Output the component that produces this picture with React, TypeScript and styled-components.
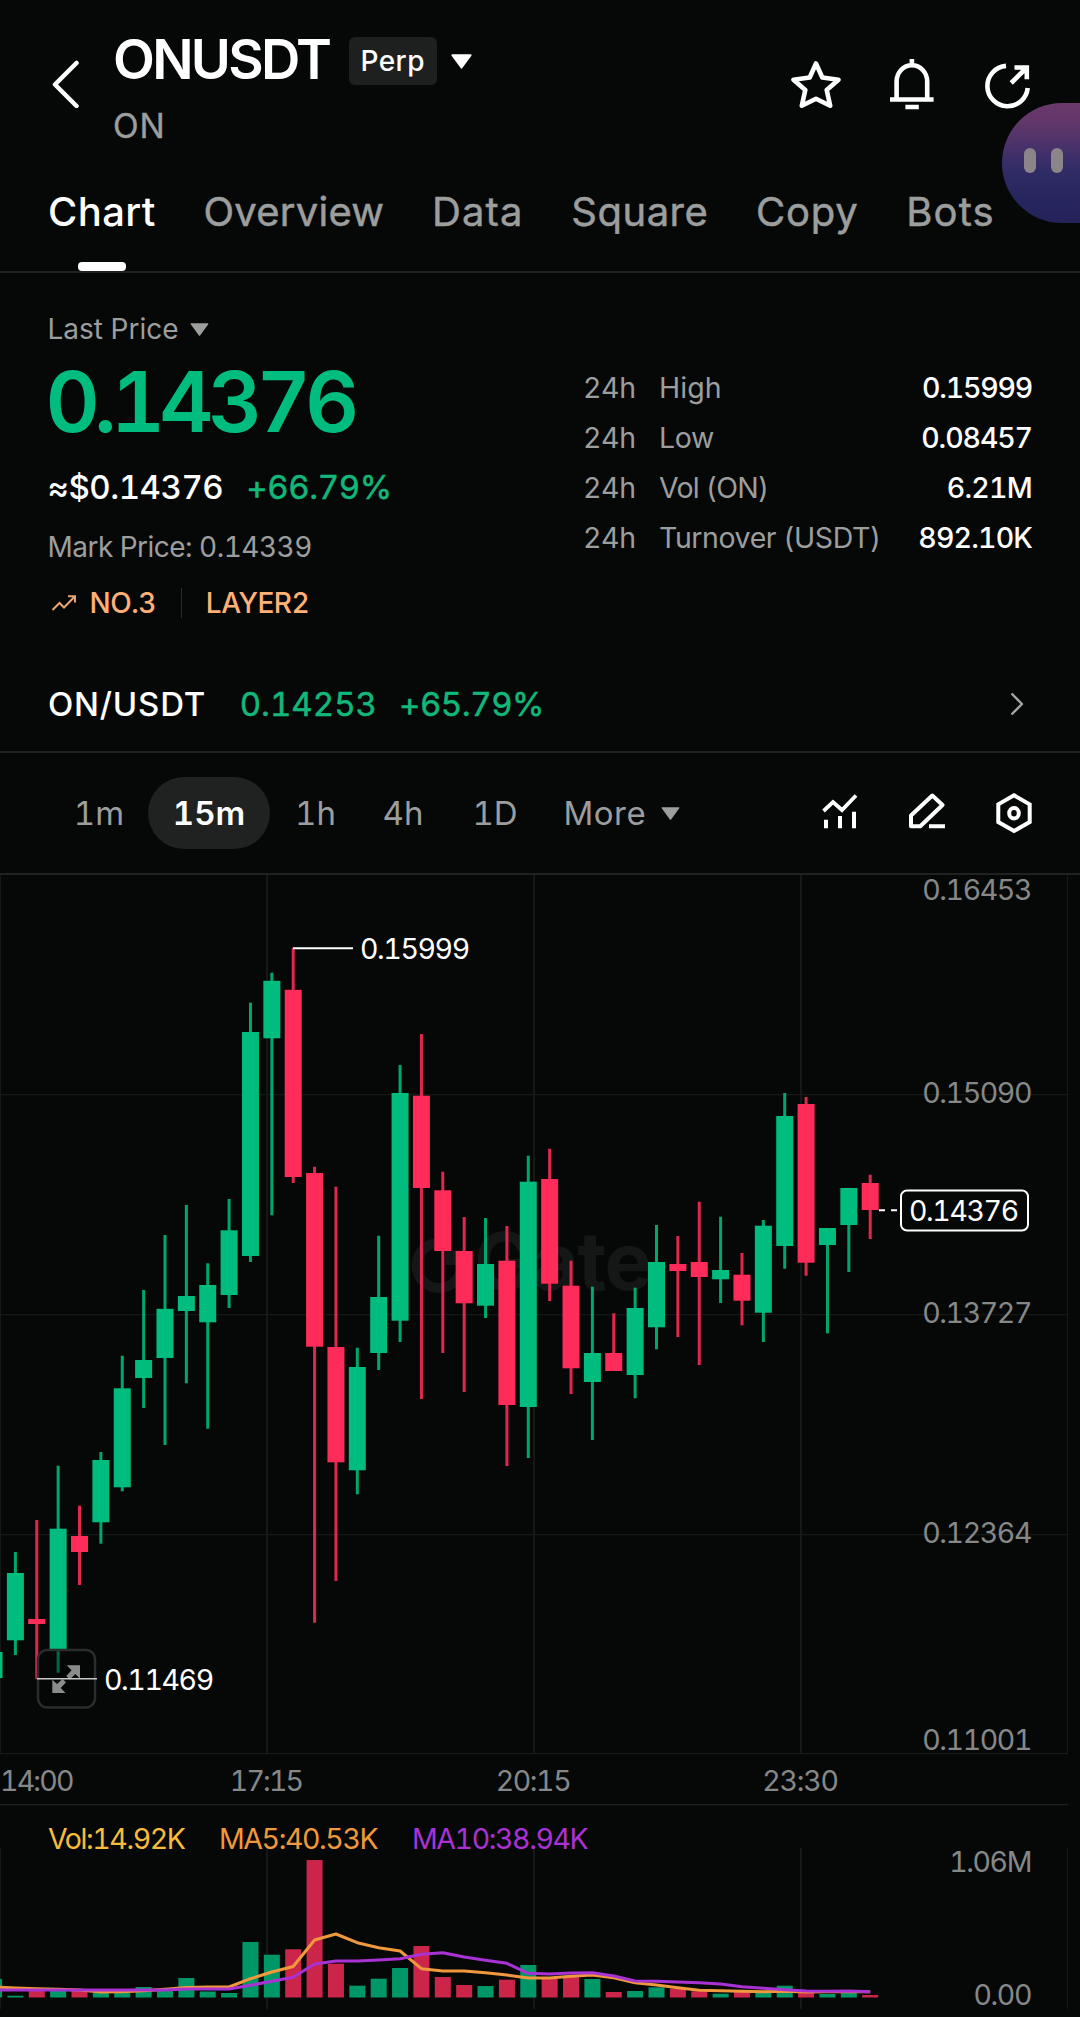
import React from 'react';
import styled, { createGlobalStyle, css } from 'styled-components';

const GREEN = '#00bc7e';
const RED = '#ff2b59';
const MUTED = '#9c9e9e';
const LINE = '#202222';

const GlobalStyle = createGlobalStyle`
  * { box-sizing: border-box; }
  body {
    margin: 0;
    background: #060808;
    color: #fff;
    font-family: Inter, "Liberation Sans", sans-serif;
    font-variant-numeric: tabular-nums;
    -webkit-font-smoothing: antialiased;
  }
`;

const Page = styled.main`
  position: relative;
  width: 1080px;
  height: 2017px;
  overflow: hidden;
  display: flex;
  flex-direction: column;
`;

/* ---------- header ---------- */

const Header = styled.header`
  display: flex;
  align-items: flex-start;
  height: 170px;
  padding: 37px 47px 0 51px;
`;

const BackButton = styled.button`
  display: flex;
  margin-top: 23px;
  padding: 0;
  border: 0;
  background: none;
`;

const TitleBlock = styled.div`
  flex: 1;
  margin-left: 34px;
`;

const TitleRow = styled.div`
  display: flex;
  align-items: center;
  height: 48px;
`;

const Title = styled.h1`
  margin: 0 0 5px;
  font-size: 54.5px;
  font-weight: 600;
  line-height: 48px;
  letter-spacing: -2.7px;
`;

const Badge = styled.span`
  width: 88px;
  height: 48px;
  margin: 0 14px 0 19.5px;
  border-radius: 6px;
  background: #1e2020;
  font-size: 28px;
  font-weight: 500;
  line-height: 48px;
  letter-spacing: 0.4px;
  text-align: center;
`;

const Subtitle = styled.div`
  margin-top: 21px;
  color: ${MUTED};
  font-size: 33.5px;
  line-height: 40px;
  letter-spacing: 0.8px;
  -webkit-text-stroke: 0.4px;
`;

const Actions = styled.div`
  display: flex;
  gap: 46px;
  margin-top: 22px;
`;

const Bubble = styled.div`
  position: absolute;
  top: 103px;
  right: 0;
  display: flex;
  gap: 15px;
  width: 78px;
  height: 120px;
  padding: 45px 0 0 21.5px;
  border-radius: 60px 0 0 60px;
  background: linear-gradient(#6b3869 0%, #63376a 15%, #47316a 38%, #312c66 55%, #27255f 80%, #25225a 100%);
`;

const Eye = styled.span`
  width: 12px;
  height: 25px;
  border-radius: 6px;
  background: #8b8489;
`;

/* ---------- tabs ---------- */

const TabBar = styled.nav`
  display: flex;
  gap: 47.6px;
  height: 103px;
  padding-left: 48px;
  border-bottom: 2px solid ${LINE};
`;

const Tab = styled.div<{ $active?: boolean; $track: number }>`
  display: flex;
  flex-direction: column;
  align-items: center;
  justify-content: space-between;
  color: ${p => (p.$active ? '#fff' : MUTED)};
  font-size: 40px;
  font-weight: ${p => (p.$active ? 500 : 400)};
  line-height: 83px;
  letter-spacing: ${p => p.$track}px;
  -webkit-text-stroke: ${p => (p.$active ? 0 : 0.5)}px;
`;

const Indicator = styled.i`
  width: 48px;
  height: 9px;
  border-radius: 4px;
  background: #fff;
`;

/* ---------- price summary ---------- */

const Summary = styled.section`
  display: flex;
  justify-content: space-between;
  height: 383px;
  padding: 36px 48px 0 47.5px;
`;

const Quote = styled.div`
  display: flex;
  flex-direction: column;
`;

const QuoteLabel = styled.div`
  display: flex;
  align-items: center;
  gap: 12px;
  height: 40px;
  color: ${MUTED};
  font-size: 28px;
`;

const BigPrice = styled.div`
  margin: 20px 0 0 -2px;
  color: ${GREEN};
  font-size: 84px;
  font-weight: 600;
  line-height: 66px;
  letter-spacing: -5.8px;
`;

const FiatRow = styled.div`
  display: flex;
  gap: 23px;
  margin-top: 32px;
  font-size: 33px;
  line-height: 40px;
`;

const Fiat = styled.span`
  font-weight: 500;
  letter-spacing: -0.45px;
`;

const Change = styled.span`
  color: #12b87b;
  letter-spacing: -0.4px;
  -webkit-text-stroke: 0.5px;
`;

const MarkPrice = styled.div`
  margin-top: 20px;
  color: ${MUTED};
  font-size: 28px;
  line-height: 40px;
  letter-spacing: -0.53px;
`;

const Tags = styled.div`
  display: flex;
  align-items: center;
  height: 30px;
  margin-top: 21px;
  color: #ffb077;
  font-size: 28px;
  font-weight: 500;
  line-height: 30px;
  letter-spacing: -0.5px;
`;

const TrendIcon = styled.svg`
  margin: 0 13px 0 3px;
`;

const TagDivider = styled.i`
  width: 1px;
  height: 30px;
  margin: 0 24px 0 25px;
  background: #2a2c2c;
`;

const Stats = styled.dl`
  display: flex;
  flex-direction: column;
  width: 449px;
  margin: 54px 0 0;
`;

const Stat = styled.div`
  display: flex;
  height: 50px;
  color: ${MUTED};
  font-size: 28.5px;
  line-height: 50px;
`;

const Period = styled.span`
  width: 76px;
  letter-spacing: -0.4px;
`;

const StatName = styled.dt<{ $track: number }>`
  flex: 1;
  white-space: nowrap;
  letter-spacing: ${p => p.$track}px;
`;

const StatValue = styled.dd<{ $track: number }>`
  margin: 0;
  color: #fff;
  font-weight: 500;
  letter-spacing: ${p => p.$track}px;
`;

/* ---------- spot pair ---------- */

const PairRow = styled.section`
  display: flex;
  align-items: center;
  height: 97px;
  padding: 0 56px 0 48px;
  border-bottom: 2px solid ${LINE};
  font-size: 33px;
`;

const PairName = styled.span`
  font-weight: 500;
  letter-spacing: 0.8px;
`;

const PairQuote = styled.span<{ $gap: number; $track: number }>`
  margin-left: ${p => p.$gap}px;
  color: #12b87b;
  letter-spacing: ${p => p.$track}px;
  -webkit-text-stroke: 0.5px;
`;

const PairChevron = styled.svg`
  margin-left: auto;
`;

/* ---------- interval bar ---------- */

const IntervalBar = styled.nav`
  display: flex;
  align-items: center;
  height: 122px;
  padding: 0 48px 0 50px;
  border-bottom: 2px solid ${LINE};
`;

const Interval = styled.button<{ $w: number; $active?: boolean }>`
  width: ${p => p.$w}px;
  height: 72px;
  padding: 0;
  border: 0;
  border-radius: 36px;
  background: none;
  color: ${MUTED};
  font: 400 33px/72px Inter, "Liberation Sans", sans-serif;
  font-variant-numeric: tabular-nums;
  ${p =>
    p.$active &&
    css`
      background: #202222;
      color: #fff;
      font-weight: 600;
    `}
`;

const More = styled.div`
  display: flex;
  align-items: center;
  flex: 1;
  gap: 15px;
  padding-left: 18.5px;
  color: ${MUTED};
  font-size: 33px;
  letter-spacing: 0.5px;
`;

const Tools = styled.div`
  display: flex;
  gap: 51px;
`;

/* ---------- chart ---------- */

const ChartSvg = styled.svg`
  display: block;
  overflow: visible;
`;

const ChartText = styled.text<{ $track?: number }>`
  font-size: 28.5px;
  letter-spacing: ${p => p.$track ?? -1.4}px;
`;

const Watermark = styled.text`
  fill: #151717;
  font-size: 80px;
  font-weight: 700;
  letter-spacing: -1.5px;
`;

type Candle = [high: number, top: number, bottom: number, low: number, up: 0 | 1];

// Pixel extents of each 15-minute candle: wick top, body top, body bottom, wick bottom.
const candles: Candle[] = [
  [1652, 1652, 1678, 1678, 1],
  [1552, 1573, 1640.3, 1655, 1],
  [1520, 1619, 1624, 1679, 0],
  [1465.7, 1528.7, 1649.7, 1672.7, 1],
  [1505.7, 1536, 1552, 1585, 0],
  [1452, 1460, 1522.3, 1543.7, 1],
  [1355.7, 1388.3, 1487.3, 1491.3, 1],
  [1290, 1360, 1378, 1408, 1],
  [1235, 1308.8, 1358, 1445, 1],
  [1205, 1296, 1311, 1383.3, 1],
  [1263.3, 1285, 1322.3, 1428.7, 1],
  [1199, 1230.3, 1295, 1308, 1],
  [1002.7, 1032, 1256, 1262, 1],
  [972.7, 980.8, 1038.3, 1215.3, 1],
  [947.7, 989.8, 1177, 1183, 0],
  [1166.7, 1173, 1346.7, 1622.7, 0],
  [1186.7, 1347, 1462.3, 1581, 0],
  [1347.7, 1367, 1470.3, 1494.3, 1],
  [1235.7, 1297, 1353, 1370, 1],
  [1065, 1093, 1320.7, 1342, 1],
  [1034, 1095.7, 1188, 1399, 0],
  [1171.7, 1190.3, 1251, 1353, 0],
  [1217, 1251, 1303.3, 1392, 0],
  [1218, 1264, 1305.7, 1318, 1],
  [1226, 1260.7, 1405, 1466, 0],
  [1155.7, 1181.7, 1407, 1458, 1],
  [1148.7, 1179, 1283.7, 1301, 0],
  [1260.7, 1285.7, 1368.3, 1394, 0],
  [1286.7, 1353, 1382, 1440, 1],
  [1313.3, 1353, 1371, 1371, 0],
  [1287.7, 1308, 1375, 1398.3, 1],
  [1225, 1262, 1327.3, 1349.3, 1],
  [1236, 1264, 1271, 1337, 0],
  [1201.7, 1262, 1277, 1365, 0],
  [1216.7, 1270, 1279.3, 1303, 1],
  [1253, 1274.7, 1300.7, 1325.3, 0],
  [1220, 1225.7, 1312.7, 1342, 1],
  [1093, 1116, 1246, 1268.7, 1],
  [1097, 1104, 1262.7, 1275.7, 0],
  [1228, 1228, 1245, 1333.3, 1],
  [1188, 1188, 1225, 1272, 1],
  [1174.7, 1183, 1210, 1239, 0],
];

const volumeTops = [
  1979, 1995.7, 1989, 1990.5, 1990, 1992.5, 1993, 1987, 1990.5, 1978, 1991.5, 1993, 1942, 1954.7, 1949.3, 1860,
  1963.7, 1985.7, 1978.7, 1968, 1946, 1977, 1985, 1986, 1979.7, 1965, 1977.7, 1977, 1979, 1992, 1991, 1987.3,
  1988.7, 1991.3, 1993.7, 1992, 1993, 1985.7, 1991.7, 1994, 1992, 1995,
];

const ma5 = [
  1987, 1988, 1988.7, 1989.3, 1990, 1992, 1991.7, 1990.7, 1989.3, 1987.5, 1987, 1987, 1978.7, 1972, 1966.5, 1940,
  1934, 1942.7, 1947.7, 1951, 1968.7, 1971, 1971, 1972.7, 1975, 1978, 1978, 1976.3, 1975, 1977.7, 1982.7, 1985,
  1987.7, 1990.3, 1990.7, 1991.3, 1991.7, 1991.3, 1992, 1991.7, 1991.7, 1991.7,
];

const ma10 = [
  1990, 1990, 1990, 1990, 1990, 1990, 1990, 1990, 1990, 1989, 1989, 1989, 1985.3, 1981.3, 1977.3, 1964, 1961, 1961,
  1960, 1958.7, 1954.3, 1952.7, 1957, 1960.3, 1963.3, 1973.3, 1974, 1973, 1972.8, 1976, 1981, 1981.3, 1982, 1982.7,
  1984, 1986.7, 1988.3, 1989.7, 1991, 1991.3, 1991, 1991.7,
];

const candleX = (i: number) => 15.4 + (i - 1) * 21.37;
const toPoints = (ys: number[]) => ys.map((y, i) => `${candleX(i).toFixed(1)},${y}`).join(' ');

const Caret = ({ w, h, color }: { w: number; h: number; color: string }) => (
  <svg width={w} height={h} viewBox="0 0 20 14">
    <path d="M1.2 1H18.8L10 13Z" fill={color} stroke={color} strokeWidth="1.6" strokeLinejoin="round" />
  </svg>
);

function PriceChart() {
  return (
    <ChartSvg width="1080" height="1142" viewBox="0 875 1080 1142">
      <g fill="#161818">
        {[0, 266, 533, 800, 1067].map(x => (
          <React.Fragment key={x}>
            <rect x={x} y="875" width={x === 0 || x === 1067 ? 1 : 2} height="879" />
            <rect x={x} y="1848" width={x === 0 || x === 1067 ? 1 : 2} height="161" />
          </React.Fragment>
        ))}
        {[1094, 1314, 1534, 1753].map(y => (
          <rect key={y} x="0" y={y} width="1068" height="1.3" />
        ))}
      </g>
      <rect x="0" y="1804" width="1068" height="1.3" fill="#1e2020" />

      <g fill="none" stroke="#151717" strokeWidth="10">
        <path d="M439 1243A22.5 22.5 0 1 0 461.5 1266" />
        <rect x="445" y="1250" width="15" height="15" fill="#151717" stroke="none" />
      </g>
      <Watermark x="474" y="1290">Gate</Watermark>

      {candles.map(([high, top, bottom, low, up], i) => (
        <g key={i} fill={up ? GREEN : RED}>
          <rect x={candleX(i) - 1.5} y={high} width="3" height={low - high} opacity="0.88" />
          <rect x={candleX(i) - 8.5} y={top} width="17" height={bottom - top} />
        </g>
      ))}

      <g fill="#868888" textAnchor="end">
        <ChartText x="1031" y="900">0.16453</ChartText>
        <ChartText x="1031" y="1103">0.15090</ChartText>
        <ChartText x="1031" y="1323">0.13727</ChartText>
        <ChartText x="1031" y="1543">0.12364</ChartText>
        <ChartText x="1031" y="1750">0.11001</ChartText>
        <ChartText x="1031" y="1872">1.06M</ChartText>
        <ChartText x="1031" y="2004.5">0.00</ChartText>
      </g>
      <g fill="#868888">
        <ChartText x="0" y="1791" $track={-1.8}>14:00</ChartText>
        <ChartText x="266" y="1791" textAnchor="middle" $track={-1.8}>17:15</ChartText>
        <ChartText x="533" y="1791" textAnchor="middle" $track={-1.4}>20:15</ChartText>
        <ChartText x="800" y="1791" textAnchor="middle" $track={-1.2}>23:30</ChartText>
      </g>

      <path d="M293 948.3H353" stroke="#fff" strokeWidth="2" />
      <ChartText x="360" y="959" fill="#fff">0.15999</ChartText>
      <ChartText x="104" y="1690" fill="#fff">0.11469</ChartText>

      <g>
        <rect x="38" y="1650" width="57" height="57.5" rx="9" fill="#060808" fillOpacity="0.4" stroke="#2b2d2d" strokeWidth="2.5" />
        <g fill="#8a8c8c">
          <path d="M66.7 1665.3H80V1678.7L75.3 1674L69.8 1679.5L66.3 1676L71.6 1670.3Z" />
          <path d="M52.3 1679.7L57 1684L62.5 1679L66 1682.3L60.7 1688L65.5 1693H52.3Z" />
        </g>
        <path d="M37 1678.7H97" stroke="#c8c9c9" strokeWidth="1.6" />
      </g>

      <path d="M879 1210.3H885M891 1210.3H897" stroke="#fff" strokeWidth="2" />
      <rect x="901" y="1190.5" width="127" height="40" rx="6" fill="#060808" stroke="#fff" strokeWidth="2" />
      <ChartText x="909" y="1221" fill="#fff">0.14376</ChartText>

      {volumeTops.map((top, i) => (
        <rect key={i} x={candleX(i) - 8} y={top} width="16" height={1997.5 - top} fill={candles[i][4] ? '#009768' : '#cc254a'} />
      ))}
      <g fill="none" strokeWidth="3" strokeLinejoin="round">
        <polyline points={toPoints(ma5)} stroke="#f0993c" />
        <polyline points={toPoints(ma10)} stroke="#a932d4" />
      </g>

      <ChartText x="48" y="1849" fill="#f8bc3a">Vol:14.92K</ChartText>
      <ChartText x="219" y="1849" fill="#f0993c">MA5:40.53K</ChartText>
      <ChartText x="412" y="1849" fill="#a932d4">MA10:38.94K</ChartText>
    </ChartSvg>
  );
}

const stats = [
  { name: 'High', value: '0.15999', track: 0.1, valueTrack: -1.2 },
  { name: 'Low', value: '0.08457', track: -0.3, valueTrack: -1.1 },
  { name: 'Vol (ON)', value: '6.21M', track: -0.75, valueTrack: -0.75 },
  { name: 'Turnover (USDT)', value: '892.10K', track: -0.42, valueTrack: -0.85 },
];

export default function App() {
  return (
    <Page>
      <GlobalStyle />

      <Header>
        <BackButton aria-label="Back">
          <svg width="28" height="48" viewBox="51 60 28 48" fill="none" stroke="#fff" strokeWidth="4.5" strokeLinejoin="round">
            <path d="M76.5 63L55 84.5L76.5 106" strokeLinecap="round" />
          </svg>
        </BackButton>
        <TitleBlock>
          <TitleRow>
            <Title>ONUSDT</Title>
            <Badge>Perp</Badge>
            <Caret w={21} h={15} color="#fff" />
          </TitleRow>
          <Subtitle>ON</Subtitle>
        </TitleBlock>
        <Actions>
          <svg width="50" height="52" viewBox="791 59 50 52" fill="none" stroke="#fff" strokeWidth="4.6" strokeLinejoin="round">
            <path d="M816 63.5L822.3 77.5L838.5 79.7L826.7 90L830.2 105.7L816 98.7L801.8 105.7L805.3 90L793.5 79.7L809.7 77.5Z" />
          </svg>
          <svg width="50" height="52" viewBox="887 59 50 52" fill="none" stroke="#fff" strokeWidth="4.6">
            <path d="M896.6 99V81.5A15.3 16.2 0 0 1 927.2 81.5V99M890 99.5H933.6M911.9 59V66M905.4 107H918.8" />
          </svg>
          <svg width="50" height="52" viewBox="983 59 50 52" fill="none" stroke="#fff" strokeWidth="4.6">
            <path d="M1027.7 88A20.2 20.2 0 1 1 1006 65.9M1014.5 67.5H1026.8V79.3M1026.8 67.5L1011.2 83" />
          </svg>
        </Actions>
      </Header>

      <TabBar>
        <Tab $active $track={0.4}>
          Chart
          <Indicator />
        </Tab>
        <Tab $track={0.25}>Overview</Tab>
        <Tab $track={1.2}>Data</Tab>
        <Tab $track={0.5}>Square</Tab>
        <Tab $track={0.8}>Copy</Tab>
        <Tab $track={1.2}>Bots</Tab>
      </TabBar>

      <Summary>
        <Quote>
          <QuoteLabel>
            Last Price
            <Caret w={19} h={13} color={MUTED} />
          </QuoteLabel>
          <BigPrice>0.14376</BigPrice>
          <FiatRow>
            <Fiat>≈$0.14376</Fiat>
            <Change>+66.79%</Change>
          </FiatRow>
          <MarkPrice>Mark Price: 0.14339</MarkPrice>
          <Tags>
            <TrendIcon width="26" height="18" viewBox="50.5 594 26 18" fill="none" stroke="#e8a56f" strokeWidth="2">
              <path d="M52 610L59 603L63.5 607.5L74.3 596.5M67.5 596.2H74.5V602.5" />
            </TrendIcon>
            NO.3
            <TagDivider />
            LAYER2
          </Tags>
        </Quote>
        <Stats>
          {stats.map(s => (
            <Stat key={s.name}>
              <Period>24h</Period>
              <StatName $track={s.track}>{s.name}</StatName>
              <StatValue $track={s.valueTrack}>{s.value}</StatValue>
            </Stat>
          ))}
        </Stats>
      </Summary>

      <PairRow>
        <PairName>ON/USDT</PairName>
        <PairQuote $gap={33.5} $track={0}>0.14253</PairQuote>
        <PairQuote $gap={22} $track={-0.45}>+65.79%</PairQuote>
        <PairChevron width="14" height="24" viewBox="0 0 14 24" fill="none" stroke="#a4a6a6" strokeWidth="2.4">
          <path d="M1.5 1.5L12 12L1.5 22.5" strokeLinejoin="round" />
        </PairChevron>
      </PairRow>

      <IntervalBar>
        <Interval $w={98}>1m</Interval>
        <Interval $w={122} $active>15m</Interval>
        <Interval $w={91}>1h</Interval>
        <Interval $w={84}>4h</Interval>
        <Interval $w={100}>1D</Interval>
        <More>
          More
          <Caret w={19} h={13} color={MUTED} />
        </More>
        <Tools>
          <svg width="36" height="38" viewBox="822 794 36 38" fill="none" stroke="#fff" strokeWidth="4">
            <path d="M823.5 813L833 804L842 812L856 797.5" strokeWidth="3.8" />
            <path d="M826 821.7V830.3M840 818V830.3M854 813.7V830.3" />
          </svg>
          <svg width="36" height="38" viewBox="909 794 36 38" fill="none" stroke="#fff" strokeWidth="4" strokeLinejoin="round">
            <path d="M932.3 797.5L942.5 807L920.3 828.3H911V817.5ZM929 828.3H945" />
          </svg>
          <svg width="36" height="42" viewBox="996 793 36 42" fill="none" stroke="#fff" strokeWidth="4">
            <path d="M1014 796.3L1029.7 805.3V823L1014 832L998.3 823V805.3Z" />
            <ellipse cx="1014" cy="814.2" rx="4.8" ry="5.2" />
          </svg>
        </Tools>
      </IntervalBar>

      <PriceChart />

      <Bubble>
        <Eye />
        <Eye />
      </Bubble>
    </Page>
  );
}
